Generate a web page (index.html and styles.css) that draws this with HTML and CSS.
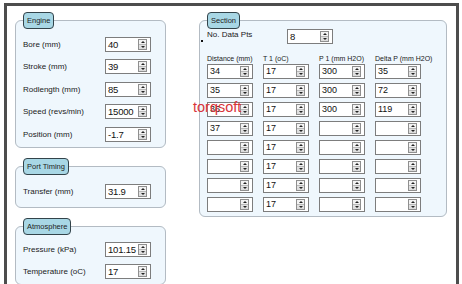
FILE: index.html
```html
<!DOCTYPE html>
<html lang="en">

<head>
    <meta charset="UTF-8">
    <meta name="viewport" content="width=device-width, initial-scale=1.0">
    <title>Engine Section</title>
    <link rel="stylesheet" href="styles.css">
</head>

<body>
    <div class="frame">
        <div class="left">
            <fieldset class="group engine">
                <legend>Engine</legend>
                <div class="row"><span class="lbl">Bore (mm)</span><div class="spin"><span class="val">40</span><i class="btn"></i></div></div>
                <div class="row"><span class="lbl">Stroke (mm)</span><div class="spin"><span class="val">39</span><i class="btn"></i></div></div>
                <div class="row"><span class="lbl">Rodlength (mm)</span><div class="spin"><span class="val">85</span><i class="btn"></i></div></div>
                <div class="row"><span class="lbl">Speed (revs/min)</span><div class="spin"><span class="val">15000</span><i class="btn"></i></div></div>
                <div class="row"><span class="lbl">Position (mm)</span><div class="spin"><span class="val">-1.7</span><i class="btn"></i></div></div>
            </fieldset>

            <fieldset class="group port">
                <legend>Port Timing</legend>
                <div class="row"><span class="lbl">Transfer (mm)</span><div class="spin"><span class="val">31.9</span><i class="btn"></i></div></div>
            </fieldset>

            <fieldset class="group atmos">
                <legend>Atmosphere</legend>
                <div class="row"><span class="lbl">Pressure (kPa)</span><div class="spin"><span class="val">101.15</span><i class="btn"></i></div></div>
                <div class="row"><span class="lbl">Temperature (oC)</span><div class="spin"><span class="val">17</span><i class="btn"></i></div></div>
            </fieldset>
        </div>

        <fieldset class="group section">
            <legend>Section</legend>
            <div class="row pts">
                <i class="dot"></i><span class="lbl">No. Data Pts</span><div class="spin"><span class="val">8</span><i class="btn"></i></div>
            </div>

            <div class="grid heads">
                <span>Distance (mm)</span>
                <span>T 1 (oC)</span>
                <span>P 1 (mm H2O)</span>
                <span>Delta P (mm H2O)</span>
            </div>

            <div class="grid cells">
                <div class="spin"><span class="val">34</span><i class="btn"></i></div>
                <div class="spin"><span class="val">17</span><i class="btn"></i></div>
                <div class="spin"><span class="val">300</span><i class="btn"></i></div>
                <div class="spin"><span class="val">35</span><i class="btn"></i></div>

                <div class="spin"><span class="val">35</span><i class="btn"></i></div>
                <div class="spin"><span class="val">17</span><i class="btn"></i></div>
                <div class="spin"><span class="val">300</span><i class="btn"></i></div>
                <div class="spin"><span class="val">72</span><i class="btn"></i></div>

                <div class="spin"><span class="val">36</span><i class="btn"></i></div>
                <div class="spin"><span class="val">17</span><i class="btn"></i></div>
                <div class="spin"><span class="val">300</span><i class="btn"></i></div>
                <div class="spin"><span class="val">119</span><i class="btn"></i></div>

                <div class="spin"><span class="val">37</span><i class="btn"></i></div>
                <div class="spin"><span class="val">17</span><i class="btn"></i></div>
                <div class="spin"><span class="val"></span><i class="btn"></i></div>
                <div class="spin"><span class="val"></span><i class="btn"></i></div>

                <div class="spin"><span class="val"></span><i class="btn"></i></div>
                <div class="spin"><span class="val">17</span><i class="btn"></i></div>
                <div class="spin"><span class="val"></span><i class="btn"></i></div>
                <div class="spin"><span class="val"></span><i class="btn"></i></div>

                <div class="spin"><span class="val"></span><i class="btn"></i></div>
                <div class="spin"><span class="val">17</span><i class="btn"></i></div>
                <div class="spin"><span class="val"></span><i class="btn"></i></div>
                <div class="spin"><span class="val"></span><i class="btn"></i></div>

                <div class="spin"><span class="val"></span><i class="btn"></i></div>
                <div class="spin"><span class="val">17</span><i class="btn"></i></div>
                <div class="spin"><span class="val"></span><i class="btn"></i></div>
                <div class="spin"><span class="val"></span><i class="btn"></i></div>

                <div class="spin"><span class="val"></span><i class="btn"></i></div>
                <div class="spin"><span class="val">17</span><i class="btn"></i></div>
                <div class="spin"><span class="val"></span><i class="btn"></i></div>
                <div class="spin"><span class="val"></span><i class="btn"></i></div>
            </div>
        </fieldset>

        <div class="watermark">torqsoft</div>
    </div>
</body>

</html>
```

FILE: styles.css
```css
body {
    margin: 0;
    padding: 0;
    background-color: #fff;
    font-family: "Liberation Sans", Arial, sans-serif;
    color: #1a1a1a;
    overflow: hidden;
}

.frame {
    position: relative;
    display: flex;
    align-items: flex-start;
    width: 449px;
    height: 300px;
    margin: 3px 0 0 4px;
    border: 3px solid #4d4d4d;
    background-color: #fff;
}

.left {
    display: flex;
    flex-direction: column;
    margin-left: 8px;
    width: 151px;
}

.group {
    margin: 6px 0 0 0;
    padding: 8px 7px 5px 7px;
    min-width: 0;
    border: 1px solid #b3bbc3;
    border-radius: 6px;
    background-color: #eff7fd;
    display: flex;
    flex-direction: column;
    gap: 7.4px;
}

.group legend {
    height: 17px;
    box-sizing: border-box;
    padding: 0 3px;
    border: 1px solid #33434a;
    border-radius: 4px;
    background-color: #a8d7e5;
    font-size: 7.5px;
    line-height: 15px;
    color: #1d1d1d;
}

.port {
    margin-top: 10px;
    padding-top: 9px;
    padding-bottom: 8px;
}

.atmos {
    margin-top: 10px;
    padding-top: 7px;
    gap: 7px;
}

.row {
    display: flex;
    align-items: center;
    height: 15px;
}

.lbl {
    width: 82px;
    font-size: 8px;
    white-space: nowrap;
}

.spin {
    display: flex;
    align-items: center;
    width: 46px;
    height: 15px;
    box-sizing: border-box;
    padding-left: 2px;
    border: 1px solid #7d7d7d;
    background-color: #fff;
}

.val {
    flex: 1;
    min-width: 0;
    font-size: 9.5px;
    line-height: 13px;
    letter-spacing: -0.2px;
    white-space: nowrap;
    color: #111;
}

.btn {
    display: flex;
    flex-direction: column;
    justify-content: space-between;
    align-items: center;
    flex: none;
    width: 7px;
    height: 7px;
    padding: 1px 0;
    margin-right: 3px;
    border: 1px solid #8f8f8f;
    background: linear-gradient(#f3f3f3 0, #f3f3f3 45%, #b9b9b9 45%, #b9b9b9 55%, #e2e2e2 55%, #dcdcdc 100%);
}

.btn::before {
    content: "";
    border-left: 2px solid transparent;
    border-right: 2px solid transparent;
    border-bottom: 2px solid #222;
}

.btn::after {
    content: "";
    border-left: 2px solid transparent;
    border-right: 2px solid transparent;
    border-top: 2px solid #222;
}

.section {
    margin-left: 33px;
    width: 248px;
    box-sizing: border-box;
    padding: 0 7px 4px 7px;
    gap: 0;
}

.pts .lbl {
    width: 80px;
    align-self: flex-start;
    margin-top: 1px;
}

.dot {
    width: 2px;
    height: 2px;
    margin-left: -6px;
    margin-right: 4px;
    margin-top: 8px;
    background-color: #111;
}

.grid {
    display: grid;
    grid-template-columns: repeat(4, 46px);
    column-gap: 10px;
}

.heads {
    margin-top: 10px;
    font-size: 7px;
    line-height: 9px;
    white-space: nowrap;
}

.cells {
    margin-top: 1px;
    row-gap: 4px;
}

.cells .val {
    font-size: 9px;
    letter-spacing: 0;
}

.watermark {
    position: absolute;
    left: 186px;
    top: 93px;
    font-size: 14.5px;
    line-height: 16px;
    color: #d8343a;
}
```
